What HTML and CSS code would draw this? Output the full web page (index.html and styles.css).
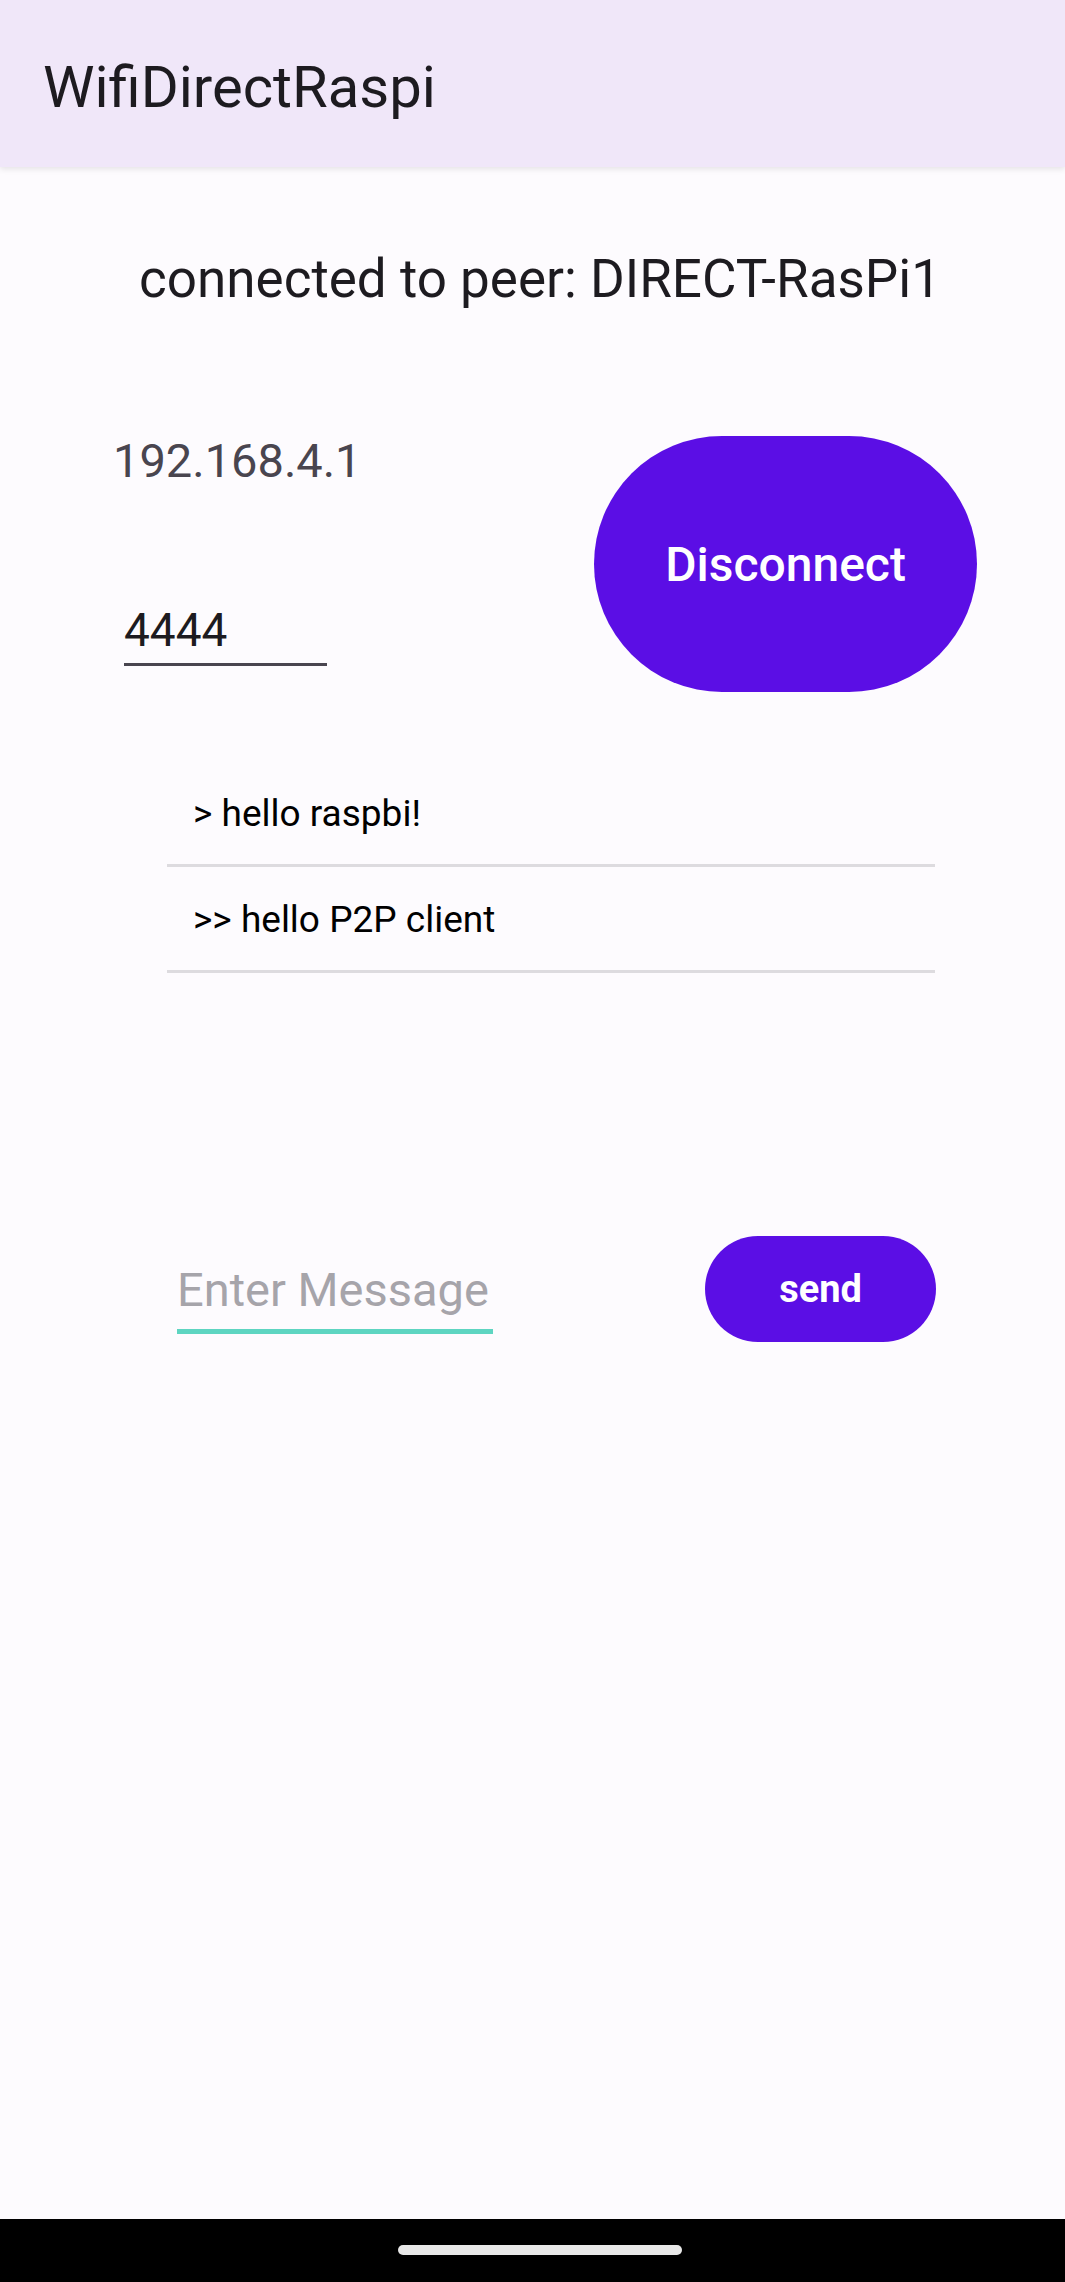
FILE: index.html
```html
<!DOCTYPE html>
<html lang="en">
<head>
<meta charset="utf-8">
<title>WifiDirectRaspi</title>
<link rel="stylesheet" href="styles.css">
</head>
<body>
<div class="app">
  <header class="appbar">
    <h1 class="title">WifiDirectRaspi</h1>
  </header>
  <main class="content">
    <p class="peer">connected to peer: DIRECT-RasPi1</p>
    <section class="conn-row">
      <div class="conn-fields">
        <div class="ip">192.168.4.1</div>
        <div class="port-field"><span class="port-value">4444</span></div>
      </div>
      <button class="btn btn-disconnect">Disconnect</button>
    </section>
    <ul class="messages">
      <li class="msg">&gt; hello raspbi!</li>
      <li class="msg">&gt;&gt; hello P2P client</li>
    </ul>
    <section class="compose">
      <div class="msg-field"><span class="placeholder">Enter Message</span></div>
      <button class="btn btn-send">send</button>
    </section>
  </main>
  <footer class="navbar"><span class="handle"></span></footer>
</div>
</body>
</html>
```

FILE: styles.css
```css
* { box-sizing: border-box; }
html, body {
  margin: 0;
  padding: 0;
  background: #fdfbfe;
  font-family: Roboto, "Noto Sans", "Liberation Sans", sans-serif;
}
.app {
  min-height: 2282px;
  display: flex;
  flex-direction: column;
}
.appbar {
  height: 167px;
  background: #f0e7f9;
  display: flex;
  align-items: center;
  padding: 6px 0 0 43px;
  box-shadow: 0 2px 6px rgba(0, 0, 0, 0.10);
  position: relative;
  z-index: 1;
}
.title {
  margin: 0;
  font-size: 58px;
  font-weight: 400;
  line-height: 70px;
  color: #1d1b20;
}
.content {
  flex: 1;
  display: flex;
  flex-direction: column;
}
.peer {
  margin: 84px 0 0 15px;
  font-size: 53px;
  line-height: 56px;
  text-align: center;
  color: #1d1b20;
}
.conn-row {
  margin-top: 126px;
  display: flex;
  justify-content: space-between;
  align-items: flex-start;
  padding: 0 88px 0 113px;
}
.conn-fields {
  display: flex;
  flex-direction: column;
}
.ip {
  font-size: 47px;
  line-height: 56px;
  color: #49454f;
}
.port-field {
  margin: 113px 0 0 11px;
  width: 203px;
  padding-bottom: 5px;
  border-bottom: 3px solid #49454f;
}
.port-value {
  display: block;
  font-size: 46px;
  line-height: 56px;
  color: #1d1b20;
}
.btn {
  border: none;
  color: #ffffff;
  background: #5b0ee5;
  font-family: Roboto, "Noto Sans", "Liberation Sans", sans-serif;
  padding: 0;
}
.btn-disconnect {
  margin-top: 3px;
  width: 383px;
  height: 256px;
  border-radius: 128px;
  font-size: 48px;
  font-weight: 500;
}
.messages {
  list-style: none;
  margin: 69px 130px 0 167px;
  padding: 0;
}
.msg {
  padding: 31px 0 28px 26px;
  font-size: 37px;
  line-height: 44px;
  color: #000000;
  border-bottom: 3px solid #dddbdf;
}
.compose {
  margin-top: 263px;
  display: flex;
  justify-content: space-between;
  align-items: flex-start;
  padding: 0 129px 0 177px;
}
.msg-field {
  margin-top: 26px;
  width: 316px;
  padding-bottom: 11px;
  border-bottom: 5px solid #5ed5c1;
}
.placeholder {
  display: block;
  font-size: 47px;
  line-height: 56px;
  color: #a6a4aa;
}
.btn-send {
  width: 231px;
  height: 106px;
  border-radius: 53px;
  font-size: 38px;
  font-weight: 700;
}
.navbar {
  height: 63px;
  background: #000000;
  display: flex;
  justify-content: center;
  align-items: flex-start;
  padding: 26px 0 0 15px;
}
.handle {
  width: 284px;
  height: 10px;
  border-radius: 5px;
  background: #e8e8e8;
}
```
